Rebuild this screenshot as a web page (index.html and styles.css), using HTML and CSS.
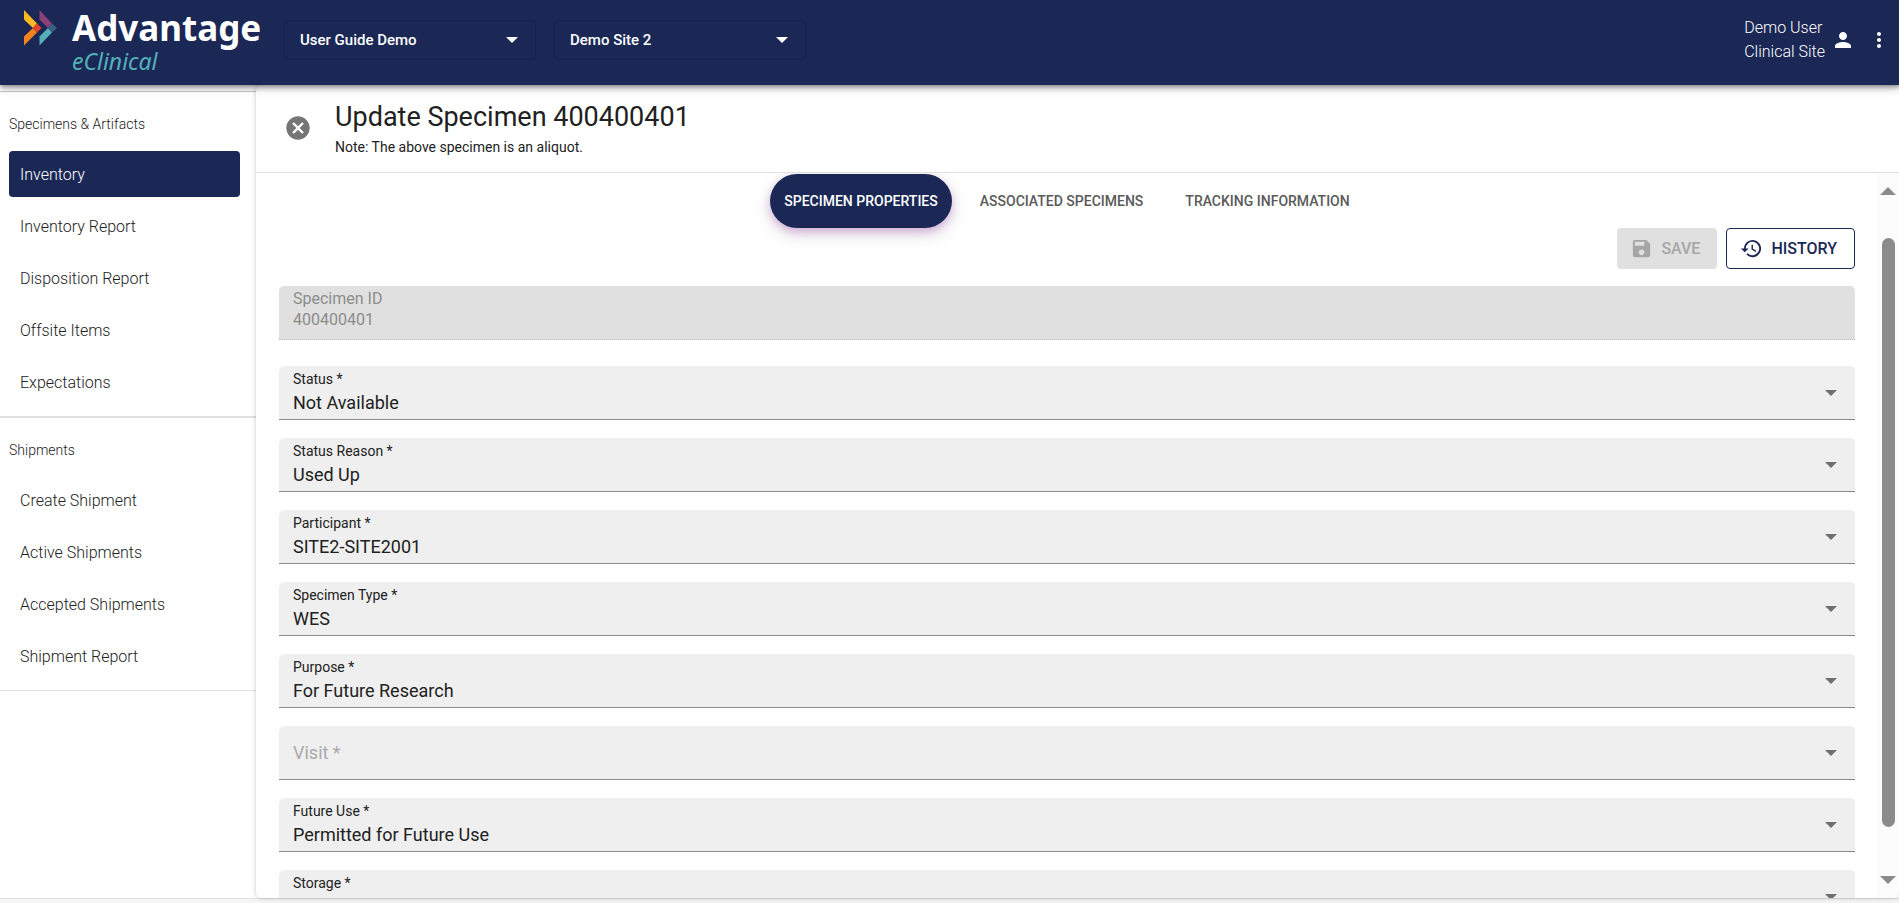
FILE: index.html
```html
<!DOCTYPE html>
<html lang="en">
<head>
<meta charset="utf-8">
<title>Update Specimen 400400401</title>
<link rel="stylesheet" href="styles.css">
</head>
<body>
<header class="topbar">
  <a class="logo" href="#" aria-label="Advantage eClinical">
    <svg class="logo-mark" viewBox="0 0 34 36" width="34" height="36" aria-hidden="true">
      <path fill="#fdb924" d="M0 0 13 13.5 9 18 0 9.5z"/>
      <path fill="#f58220" d="M0 35.500V26.500L9 18l4 4.500z"/>
      <path fill="#e8432e" d="M13 13.500 17.500 18 13 22.500 9 18z"/>
      <path fill="#8a4078" d="M15.500 0 28 13.500 24 18 15.500 9.500z"/>
      <path fill="#54b0b8" d="M15.500 35.500V26.500L24 18l4 4.500z"/>
      <path fill="#386080" d="M28 13.500 33 18 28 22.500 24 18z"/>
    </svg>
    <span class="logo-text"><span class="logo-name">Advantage</span><span class="logo-sub">eClinical</span></span>
  </a>
  <div class="pickers">
    <div class="picker"><select aria-label="Study"><option>User Guide Demo</option></select><span class="caret"></span></div>
    <div class="picker"><select aria-label="Site"><option>Demo Site 2</option></select><span class="caret"></span></div>
  </div>
  <div class="user">
    <div class="user-name">Demo User<br>Clinical Site</div>
    <button class="icon-btn" aria-label="Account"><svg viewBox="0 0 24 24" width="24" height="24"><path d="M12 12c2.210 0 4-1.790 4-4s-1.790-4-4-4-4 1.790-4 4 1.790 4 4 4zm0 2c-2.670 0-8 1.340-8 4v2h16v-2c0-2.660-5.330-4-8-4z"/></svg></button>
    <button class="icon-btn" aria-label="More"><svg viewBox="0 0 24 24" width="24" height="24"><path d="M12 8c1.100 0 2-.9 2-2s-.9-2-2-2-2 .9-2 2 .9 2 2 2zm0 2c-1.100 0-2 .9-2 2s.9 2 2 2 2-.9 2-2-.9-2-2-2zm0 6c-1.100 0-2 .9-2 2s.9 2 2 2 2-.9 2-2-.9-2-2-2z"/></svg></button>
  </div>
</header>
<div class="body">
  <nav class="sidebar">
    <section class="group">
      <h2>Specimens &amp; Artifacts</h2>
      <a class="active" href="#">Inventory</a>
      <a href="#">Inventory Report</a>
      <a href="#">Disposition Report</a>
      <a href="#">Offsite Items</a>
      <a href="#">Expectations</a>
    </section>
    <section class="group">
      <h2>Shipments</h2>
      <a href="#">Create Shipment</a>
      <a href="#">Active Shipments</a>
      <a href="#">Accepted Shipments</a>
      <a href="#">Shipment Report</a>
    </section>
  </nav>
  <main class="panel">
    <div class="heading">
      <button class="close" aria-label="Close"><svg viewBox="0 0 24 24" width="28" height="28"><path d="M12 2C6.470 2 2 6.470 2 12s4.470 10 10 10 10-4.470 10-10S17.530 2 12 2zm5 13.590L15.590 17 12 13.410 8.410 17 7 15.590 10.590 12 7 8.410 8.410 7 12 10.590 15.590 7 17 8.410 13.410 12 17 15.590z"/></svg></button>
      <div>
        <h1>Update Specimen 400400401</h1>
        <p>Note: The above specimen is an aliquot.</p>
      </div>
    </div>
    <div class="scroller">
      <div class="content">
        <div class="tabs" role="tablist">
          <button class="tab selected" role="tab" aria-selected="true">SPECIMEN PROPERTIES</button>
          <button class="tab" role="tab">ASSOCIATED SPECIMENS</button>
          <button class="tab" role="tab">TRACKING INFORMATION</button>
        </div>
        <div class="actions">
          <button class="action save" disabled><svg viewBox="0 0 24 24" width="23" height="23"><path d="M17 3H5c-1.110 0-2 .9-2 2v14c0 1.100.89 2 2 2h14c1.100 0 2-.9 2-2V7l-4-4zm-5 16c-1.660 0-3-1.340-3-3s1.340-3 3-3 3 1.340 3 3-1.340 3-3 3zm3-10H5V5h10v4z"/></svg>SAVE</button>
          <button class="action history"><svg viewBox="0 0 24 24" width="23" height="23"><path d="M13 3a9 9 0 0 0-9 9H1l3.890 3.890.07.140L9 12H6a7 7 0 1 1 2.060 4.940l-1.420 1.420A9 9 0 1 0 13 3zm-1 5v5l4.280 2.540.72-1.210-3.500-2.080V8H12z"/></svg>HISTORY</button>
        </div>
        <form class="fields">
          <div class="field disabled"><label for="sid">Specimen ID</label><input id="sid" value="400400401" disabled></div>
          <div class="field"><label for="f1">Status *</label><select id="f1"><option>Not Available</option></select><span class="caret"></span></div>
          <div class="field"><label for="f2">Status Reason *</label><select id="f2"><option>Used Up</option></select><span class="caret"></span></div>
          <div class="field"><label for="f3">Participant *</label><select id="f3"><option>SITE2-SITE2001</option></select><span class="caret"></span></div>
          <div class="field"><label for="f4">Specimen Type *</label><select id="f4"><option>WES</option></select><span class="caret"></span></div>
          <div class="field"><label for="f5">Purpose *</label><select id="f5"><option>For Future Research</option></select><span class="caret"></span></div>
          <div class="field empty"><label for="f6">Visit *</label><select id="f6"><option></option></select><span class="caret"></span></div>
          <div class="field"><label for="f7">Future Use *</label><select id="f7"><option>Permitted for Future Use</option></select><span class="caret"></span></div>
          <div class="field"><label for="f8">Storage *</label><select id="f8"><option></option></select><span class="caret"></span></div>
        </form>
      </div>
      <div class="scrollbar" aria-hidden="true"><span class="arrow up"></span><span class="track"><span class="thumb"></span></span><span class="arrow down"></span></div>
    </div>
  </main>
</div>
</body>
</html>
```
FILE: styles.css
```css
* { box-sizing: border-box; }
body {
  margin: 0;
  height: 100vh;
  display: flex;
  flex-direction: column;
  padding-bottom: 4px;
  overflow: hidden;
  background: #f5f5f5;
  color: #212121;
  font: 16px/24px Roboto, "Liberation Sans", sans-serif;
}
button, select, input { font: inherit; color: inherit; margin: 0; border: 0; background: none; }
button { padding: 0; cursor: pointer; }
select { appearance: none; }
svg { display: block; fill: currentColor; }
h1, h2, p { margin: 0; font-weight: 400; }

.topbar {
  position: relative;
  z-index: 2;
  flex: none;
  height: 85px;
  display: flex;
  align-items: flex-start;
  background: #1b2856;
  color: #fff;
  box-shadow: 0 2px 4px -1px rgba(0,0,0,.3), 0 4px 5px rgba(0,0,0,.16), 0 1px 12px rgba(0,0,0,.2);
}
.logo { width: 284px; padding: 10px 0 0 24px; display: flex; gap: 14px; color: #fff; text-decoration: none; }
.logo-text { display: flex; flex-direction: column; font-family: "Noto Sans", sans-serif; }
.logo-name { font-size: 35px; line-height: 36px; font-weight: 700; }
.logo-sub { font-size: 23px; line-height: 30px; font-style: italic; color: #54b0b8; }
.pickers { display: flex; gap: 18px; padding-top: 20px; }
.picker { display: grid; width: 252px; height: 40px; }
.picker > *, .field > * { grid-area: 1 / 1; }
.picker select { padding: 0 15px; border: 1px solid #18224c; border-radius: 5px; font-size: 15px; font-weight: 500; }
.caret {
  align-self: center;
  justify-self: end;
  margin-right: 18px;
  border: 6px solid transparent;
  border-top-color: currentColor;
  border-bottom: 0;
  pointer-events: none;
}
.user { margin-left: auto; padding: 16px 8px 0 0; display: flex; font-weight: 300; }
.user-name { margin-right: 6px; }
.icon-btn { height: 48px; display: flex; align-items: center; }
.icon-btn + .icon-btn { margin-left: 12px; }

.body { flex: 1; min-height: 0; display: flex; background: #fff; border-bottom: 1px solid #e0e0e0; }
.sidebar { flex: none; width: 256px; padding-top: 6px; font-weight: 300; }
.group { display: flex; flex-direction: column; gap: 6px; padding: 0 16px 11px 9px; border-bottom: 1px solid #e0e0e0; }
.group:first-child { border-top: 1px solid #ccc; border-bottom-width: 2px; }
.group h2 { height: 53px; padding-top: 20px; font-size: 14px; font-weight: 300; }
.group a { height: 46px; padding: 12px 11px 10px; border-radius: 4px; color: inherit; text-decoration: none; }
.group .active { background: #1b2856; color: #fff; }

.panel {
  flex: 1;
  min-width: 0;
  display: flex;
  flex-direction: column;
  border-radius: 6px;
  overflow: hidden;
  background: #fff;
  box-shadow: 0 0 5px rgba(0,0,0,.22);
}
.heading { flex: none; height: 88px; display: flex; gap: 23px; padding: 14px 28px 0; border-bottom: 1px solid #e0e0e0; }
.heading h1 { font-size: 27px; line-height: 36px; }
.heading p { font-size: 14px; line-height: 24px; }
.close { align-self: flex-start; margin-top: 15px; color: #757575; }
.scroller { flex: 1; min-height: 0; display: flex; }
.content { flex: 1; min-width: 0; overflow: hidden; padding: 1px 22px 0 23px; }
.tabs { display: flex; justify-content: center; gap: 14px; }
.tab { height: 54px; padding: 0 14px; border-radius: 27px; font-size: 14px; font-weight: 500; color: #5a5a5a; }
.tab.selected { background: #1b2856; color: #fff; box-shadow: 0 4px 8px rgba(156,39,176,.3), 0 6px 20px rgba(0,0,0,.12); }
.actions { display: flex; justify-content: flex-end; gap: 9px; }
.action { height: 41px; display: flex; align-items: center; gap: 8px; padding: 0 17px 0 13px; border-radius: 4px; font-weight: 500; }
.save { background: #e0e0e0; color: #a6a6a6; }
.history { border: 1px solid #1b2856; color: #1b2856; }
.fields { display: flex; flex-direction: column; gap: 18px; padding-top: 17px; }
.field { flex: none; display: grid; height: 54px; background: #efefef; border-bottom: 1px solid #8a8a8a; border-radius: 5px 5px 0 0; }
.field label { z-index: 1; align-self: start; justify-self: start; padding: 3px 14px 0; font-size: 14px; line-height: 20px; pointer-events: none; }
.field select, .field input { width: 100%; min-width: 0; padding: 20px 14px 0; font-size: 18px; }
.field .caret { margin-right: 18px; color: #707070; }
.field.empty label { align-self: center; padding-top: 0; font-size: 18px; color: #aaa; }
.field.disabled { margin-bottom: 8px; background: #e0e0e0; color: #8c8c8c; border-bottom: 1px dotted #c0c0c0; }
.field.disabled label { font-size: 16px; }
.field.disabled input { font-size: 16px; padding-top: 14px; }

.scrollbar { flex: none; width: 22px; display: flex; flex-direction: column; align-items: center; padding: 14px 0 14px; background: #fcfcfc; }
.arrow { border: 8px solid transparent; }
.arrow.up { border-top: 0; border-bottom-color: #8b8b8b; }
.arrow.down { border-bottom: 0; border-top-color: #8b8b8b; }
.track { flex: 1; width: 13px; padding: 43px 0 49px; display: flex; }
.thumb { flex: 1; border-radius: 7px; background: #8b8b8b; }
```
